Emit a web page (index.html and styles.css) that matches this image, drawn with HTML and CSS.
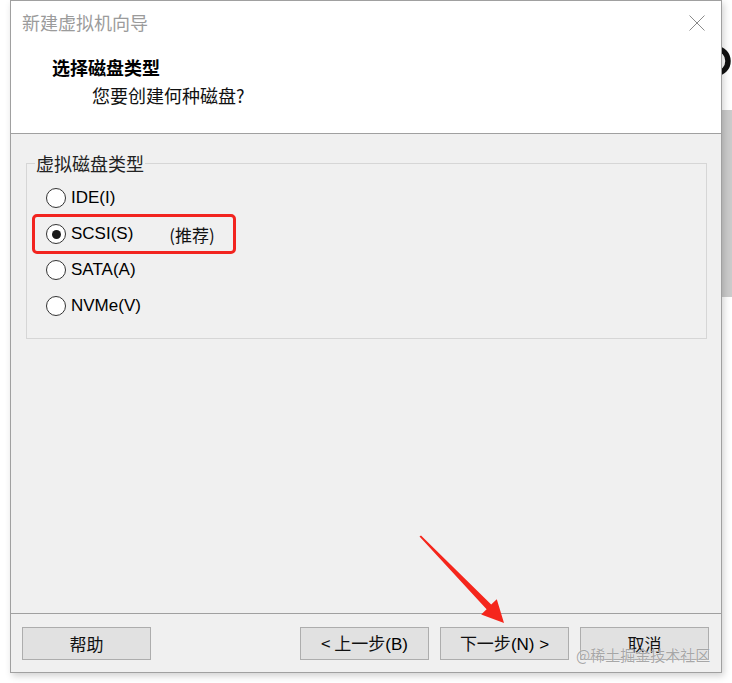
FILE: index.html
```html
<!DOCTYPE html>
<html lang="zh-CN">
<head>
<meta charset="utf-8">
<title>新建虚拟机向导</title>
<link rel="stylesheet" href="styles.css">
</head>
<body>
<div class="desk">
  <div class="window">
    <header class="head">
      <div class="titlebar">
        <span class="title">新建虚拟机向导</span>
        <svg class="close" width="16" height="16" viewBox="0 0 16 16"><path d="M0.5 0.5L15.5 15.5M15.5 0.5L0.5 15.5" stroke="#8a8a8a" stroke-width="1" fill="none"/></svg>
      </div>
      <div class="heading">选择磁盘类型</div>
      <div class="sub">您要创建何种磁盘?</div>
    </header>
    <main class="content">
      <div class="group">
        <div class="group-label">虚拟磁盘类型</div>
        <div class="options">
          <div class="radio"><span class="dot"></span><span class="lbl">IDE(I)</span></div>
          <div class="radio checked"><span class="dot"></span><span class="lbl">SCSI(S)</span><span class="rec">(推荐)</span></div>
          <div class="radio"><span class="dot"></span><span class="lbl">SATA(A)</span></div>
          <div class="radio"><span class="dot"></span><span class="lbl">NVMe(V)</span></div>
        </div>
        <div class="mark"></div>
      </div>
    </main>
    <footer class="foot">
      <button class="btn help">帮助</button>
      <button class="btn">&lt; 上一步<span class="lat">(B)</span></button>
      <button class="btn">下一步<span class="lat">(N) &gt;</span></button>
      <button class="btn">取消</button>
    </footer>
  </div>
  <div class="behind">
    <svg class="ring" width="10" height="110" viewBox="0 0 10 110"><ellipse cx="-5" cy="61" rx="11" ry="12" stroke="#111" stroke-width="5.5" fill="none"/></svg>
    <div class="scroll"></div>
  </div>
</div>
<svg class="arrow" width="732" height="683" viewBox="0 0 732 683"><polygon points="419.5,536.5 421,535.5 491.2,604.6 496.8,599.2 504,623 481.2,614.6 486.6,609.2" fill="#f5261c"/></svg>
<div class="watermark">@稀土掘金技术社区</div>
</body>
</html>
```

FILE: styles.css
```css
* { box-sizing: border-box; }
html, body { margin: 0; padding: 0; }
body {
  width: 732px;
  height: 683px;
  background: #ffffff;
  position: relative;
  overflow: hidden;
  font-family: "Noto Sans CJK SC", "Liberation Sans", sans-serif;
  color: #000;
}
.desk {
  display: flex;
  padding-left: 10px;
}
.window {
  position: relative;
  z-index: 1;
  flex: none;
  width: 712px;
  height: 673px;
  border: 1px solid #a0a0a0;
  background: #f0f0f0;
  box-shadow: 2px 3px 7px rgba(0, 0, 0, 0.18);
  display: flex;
  flex-direction: column;
}
.head {
  height: 133px;
  background: #ffffff;
  border-bottom: 1px solid #a0a0a0;
  padding: 9px 0 0 11px;
}
.titlebar {
  height: 24px;
  display: flex;
  align-items: center;
  justify-content: space-between;
  padding-right: 16px;
}
.title {
  font-size: 18px;
  line-height: 24px;
  color: #9b9b9b;
}
.close { display: block; margin-top: 1px; }
.heading {
  margin: 21px 0 0 30px;
  font-size: 18px;
  line-height: 24px;
  font-weight: 700;
  color: #000;
}
.sub {
  margin: 4px 0 0 70px;
  font-size: 18px;
  line-height: 24px;
  color: #111;
}
.content {
  height: 480px;
  border-bottom: 1px solid #a0a0a0;
  padding: 29px 14px 0 15px;
}
.group {
  position: relative;
  height: 176px;
  border: 1px solid #d6d6d6;
  padding-left: 19px;
}
.group-label {
  width: fit-content;
  margin: -11px 0 0 -11px;
  padding: 0 1px;
  background: #f0f0f0;
  font-size: 18px;
  line-height: 20px;
  color: #222;
}
.options { margin-top: 7px; }
.radio {
  height: 36px;
  display: flex;
  align-items: center;
}
.dot {
  width: 20px;
  height: 20px;
  border: 1px solid #333;
  border-radius: 50%;
  background: #fff;
  display: flex;
  align-items: center;
  justify-content: center;
  margin-right: 5px;
}
.checked .dot::after {
  content: "";
  width: 9px;
  height: 9px;
  border-radius: 50%;
  background: #1a1a1a;
}
.lbl {
  font-family: "Liberation Sans", "Noto Sans CJK SC", sans-serif;
  font-size: 17px;
  color: #000;
}
.rec {
  margin-left: 36px;
  font-size: 17px;
  color: #111;
}
.mark {
  position: absolute;
  left: 5px;
  top: 50px;
  width: 204px;
  height: 40px;
  border: 3px solid #f2241f;
  border-radius: 5px;
}
.foot {
  height: 58px;
  display: flex;
  gap: 11px;
  padding: 13px 12px 0 11px;
}
.btn {
  width: 129px;
  height: 33px;
  border: 1px solid #adadad;
  background: #e1e1e1;
  font-family: "Noto Sans CJK SC", "Liberation Sans", sans-serif;
  font-size: 17px;
  line-height: 20px;
  color: #111;
  padding: 0;
}
.btn .lat { font-family: "Liberation Sans", "Noto Sans CJK SC", sans-serif; color: #000; }
.help { margin-right: auto; }
.behind {
  flex: none;
  width: 10px;
  display: flex;
  flex-direction: column;
}
.ring { display: block; }
.scroll {
  height: 187px;
  background: #cbcbcb;
}
.arrow {
  position: absolute;
  left: 0;
  top: 0;
  z-index: 2;
  pointer-events: none;
}
.watermark {
  position: absolute;
  z-index: 3;
  left: 576px;
  top: 644px;
  font-size: 15px;
  line-height: 22px;
  color: rgba(140, 140, 140, 0.75);
  text-shadow: 0 0 1px rgba(255, 255, 255, 0.9);
  white-space: nowrap;
}
```
